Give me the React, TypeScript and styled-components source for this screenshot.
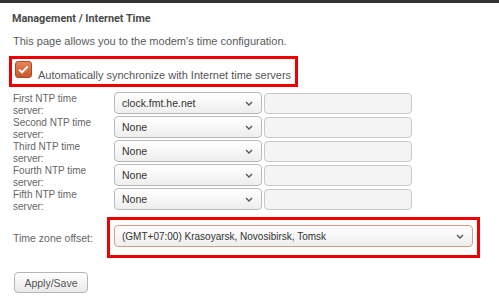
import React from "react";
import styled, { createGlobalStyle } from "styled-components";

const Global = createGlobalStyle`
  html, body { margin: 0; padding: 0; background: #fff; }
  body { font-family: "Liberation Sans", Arial, sans-serif; font-size: 10px; color: #666; }
`;

const TopBar = styled.div`
  height: 3px;
  background: #333;
`;

const Page = styled.div`
  padding: 8px 12px 0 13px;
`;

const Title = styled.div`
  margin-left: -1px;
  font-family: Roboto, "Liberation Sans", sans-serif;
  font-weight: bold;
  font-size: 10.8px;
  line-height: 15px;
  color: #4a4a4a;
`;

const Desc = styled.div`
  margin-top: 8px;
  font-size: 11px;
  line-height: 14px;
  color: #5a5a5a;
`;

const Highlight = styled.div<{ $w: number; $h: number }>`
  box-sizing: border-box;
  border: 3px solid #ee0000;
  width: ${(p) => p.$w}px;
  height: ${(p) => p.$h}px;
`;

const SyncBox = styled(Highlight)`
  margin: 8px 0 0 -4px;
  display: flex;
  align-items: flex-end;
  gap: 6px;
  padding: 2px 0 3px 3px;
`;

const Check = styled.span`
  box-sizing: border-box;
  width: 17px;
  height: 17px;
  border-radius: 3px;
  border: 1px solid #b14a22;
  background: linear-gradient(#e58558, #c9572b);
  display: flex;
  align-items: center;
  justify-content: center;
  align-self: flex-start;
`;

const CheckLabel = styled.span`
  font-size: 11px;
  color: #555;
  line-height: 12px;
`;

const Rows = styled.div`
  margin-top: 5px;
  display: grid;
  grid-template-columns: 99px 148px 148px;
  column-gap: 2px;
  grid-auto-rows: 24px;
`;

const RowLabel = styled.div`
  line-height: 12px;
  color: #666;
  padding-top: 1px;
`;

const SelectBox = styled.div<{ $focus?: boolean }>`
  box-sizing: border-box;
  height: 22px;
  border: 1px solid ${(p) => (p.$focus ? "#d99a80" : "#b9b9b9")};
  border-radius: 4px;
  background: linear-gradient(#ffffff, #eeeeee);
  display: flex;
  align-items: center;
  justify-content: space-between;
  padding: 0 8px 0 7px;
  color: #333;
  font-size: ${(p) => (p.$focus ? "10px" : "10.5px")};
`;

const TextInput = styled.div`
  box-sizing: border-box;
  height: 21px;
  margin-top: 1px;
  border: 1px solid #c8c8c8;
  border-radius: 4px;
  background: #f4f4f4;
`;

const TzRow = styled.div`
  margin-top: 5px;
  display: flex;
  align-items: center;
`;

const TzLabel = styled.div`
  width: 94px;
  font-size: 10.5px;
  color: #666;
`;

const TzBox = styled(Highlight)`
  padding: 5px 4px 0 4px;
`;

const Button = styled.button`
  margin: 14px 0 0 1px;
  box-sizing: border-box;
  width: 74px;
  height: 21px;
  border: 1px solid #b5b5b5;
  border-radius: 4px;
  background: linear-gradient(#ffffff, #e9e9e9);
  font-family: inherit;
  font-size: 10.5px;
  color: #555;
  padding: 0;
`;

const Chevron = () => (
  <svg width="8" height="5" viewBox="0 0 8 5">
    <path d="M1 1 L4 4 L7 1" fill="none" stroke="#555" strokeWidth="1.4" />
  </svg>
);

const servers = [
  ["First NTP time", "clock.fmt.he.net"],
  ["Second NTP time", "None"],
  ["Third NTP time", "None"],
  ["Fourth NTP time", "None"],
  ["Fifth NTP time", "None"],
];

export default function App() {
  return (
    <>
      <Global />
      <TopBar />
      <Page>
        <Title>Management / Internet Time</Title>
        <Desc>This page allows you to the modem's time configuration.</Desc>
        <SyncBox $w={289} $h={31}>
          <Check>
            <svg width="11" height="9" viewBox="0 0 11 9">
              <path d="M1.2 4.6 L4 7.4 L9.8 1.4" fill="none" stroke="#fff" strokeWidth="2" />
            </svg>
          </Check>
          <CheckLabel>Automatically synchronize with Internet time servers</CheckLabel>
        </SyncBox>
        <Rows>
          {servers.map(([label, value]) => (
            <React.Fragment key={label}>
              <RowLabel>
                {label}
                <br />
                server:
              </RowLabel>
              <SelectBox>
                <span>{value}</span>
                <Chevron />
              </SelectBox>
              <TextInput />
            </React.Fragment>
          ))}
        </Rows>
        <TzRow>
          <TzLabel>Time zone offset:</TzLabel>
          <TzBox $w={373} $h={41}>
            <SelectBox $focus>
              <span>(GMT+07:00) Krasoyarsk, Novosibirsk, Tomsk</span>
              <Chevron />
            </SelectBox>
          </TzBox>
        </TzRow>
        <Button>Apply/Save</Button>
      </Page>
    </>
  );
}
